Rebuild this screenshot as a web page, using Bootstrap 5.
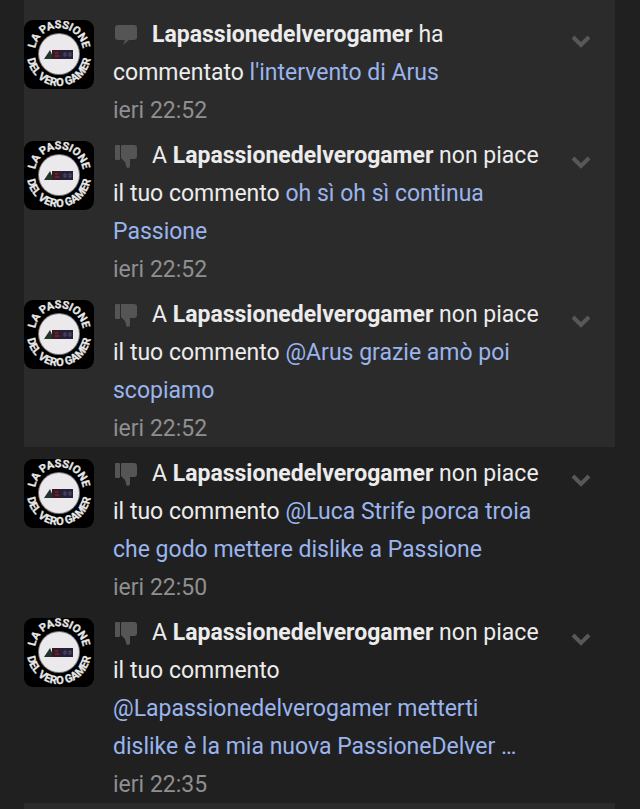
<!DOCTYPE html>
<html lang="it">
<head>
<meta charset="utf-8">
<meta name="viewport" content="width=device-width, initial-scale=1">
<title>Notifiche</title>
<link href="https://cdn.jsdelivr.net/npm/bootstrap@5.3.0/dist/css/bootstrap.min.css" rel="stylesheet">
<style>
body{background:#202020;color:#ececec;font-family:Roboto,"Liberation Sans",sans-serif;font-size:23px;line-height:38px}
.feed{padding:0 25px 0 24px}
.feed-edge{height:8px;background:#2b2b2b}
.notice{padding-top:8px;padding-right:24px}
.notice.unread,.feed-next{background:#2b2b2b}
.feed-next{height:7px}
.avatar{width:70px;margin:4px 19px 0 0}
.message{padding-right:28px}
.kind{width:24px;height:24px;margin-right:15px;fill:#555}
.notice a{color:#9ab5ee}
.notice time{color:#8f8f8f;line-height:37px}
.toggle{width:20px;height:20px;margin-top:15px;color:#585858}
.ring{font-family:Roboto,"Liberation Sans",sans-serif;font-weight:700;font-size:11px;fill:#e8e8e8;stroke:#e8e8e8;stroke-width:.3}
</style>
</head>
<body>
<svg class="position-absolute" width="0" height="0" aria-hidden="true">
<defs>
<path id="arcUpper" d="M12 39A24 24 0 1 1 58 39"/>
<path id="arcLower" d="M3 34A32 32 0 0 0 67 34"/>
</defs>
<symbol id="logo" viewBox="0 0 70 69">
<rect width="70" height="69" rx="9" fill="#000"/>
<text class="ring" text-anchor="middle"><textPath href="#arcUpper" startOffset="50%">LA PASSIONE</textPath></text>
<text class="ring" text-anchor="middle"><textPath href="#arcLower" startOffset="50%">DEL VERO GAMER</textPath></text>
<circle cx="35" cy="34" r="21" fill="#777"/>
<circle cx="35" cy="34" r="20" fill="#ebe9eb"/>
<path d="M20 39l6-9 4 9z" fill="#20352c"/><path d="M28 30h9v9h-9z" fill="#3b1824"/><path d="M37 30h12v9H37z" fill="#24213d"/>
<path d="M31 33h3m-3 3h4m5-3h2v3h-2zm5 0h2v3h-2z" stroke="#96838e" stroke-opacity=".4" fill="none"/>
</symbol>
<symbol id="comment" viewBox="0 0 24 24"><path d="M5 1h16q3 0 3 3v9q0 3-3 3h-5l-6 5 2-5H5q-3 0-3-3V4q0-3 3-3z"/></symbol>
<symbol id="dislike" viewBox="0 0 24 24"><path d="M3 0h3q1 0 1 1v13q0 1-1 1H3q-1 0-1-1V1q0-1 1-1zM9 0h12q3 0 3 3v8q0 3-3 3h-4v6q0 3-2 3t-2-3q-1-4-3-5l-2-2V1q0-1 1-1z"/></symbol>
<symbol id="chevron" viewBox="0 0 20 20"><path d="M2 6l8 8 8-8" fill="none" stroke="currentColor" stroke-width="4"/></symbol>
</svg>
<main class="feed">
<div class="feed-edge"></div>
<article class="notice unread d-flex align-items-start">
<svg class="avatar flex-shrink-0" viewBox="0 0 70 69" role="img" aria-label="La passione del vero gamer"><use href="#logo"/></svg>
<div class="message flex-grow-1"><svg class="kind" aria-hidden="true"><use href="#comment"/></svg><strong>Lapassionedelverogamer</strong> ha commentato <a class="text-decoration-none" href="#">l'intervento di Arus</a><time class="d-block">ieri 22:52</time></div>
<button class="toggle btn border-0 p-0 d-flex flex-shrink-0" type="button" aria-label="Opzioni"><svg width="20" height="20"><use href="#chevron"/></svg></button>
</article>
<article class="notice unread d-flex align-items-start">
<svg class="avatar flex-shrink-0" viewBox="0 0 70 69" role="img" aria-label="La passione del vero gamer"><use href="#logo"/></svg>
<div class="message flex-grow-1"><svg class="kind" aria-hidden="true"><use href="#dislike"/></svg>A <strong>Lapassionedelverogamer</strong> non piace il tuo commento <a class="text-decoration-none" href="#">oh sì oh sì continua Passione</a><time class="d-block">ieri 22:52</time></div>
<button class="toggle btn border-0 p-0 d-flex flex-shrink-0" type="button" aria-label="Opzioni"><svg width="20" height="20"><use href="#chevron"/></svg></button>
</article>
<article class="notice unread d-flex align-items-start">
<svg class="avatar flex-shrink-0" viewBox="0 0 70 69" role="img" aria-label="La passione del vero gamer"><use href="#logo"/></svg>
<div class="message flex-grow-1"><svg class="kind" aria-hidden="true"><use href="#dislike"/></svg>A <strong>Lapassionedelverogamer</strong> non piace il tuo commento <a class="text-decoration-none" href="#">@Arus grazie amò poi scopiamo</a><time class="d-block">ieri 22:52</time></div>
<button class="toggle btn border-0 p-0 d-flex flex-shrink-0" type="button" aria-label="Opzioni"><svg width="20" height="20"><use href="#chevron"/></svg></button>
</article>
<article class="notice d-flex align-items-start">
<svg class="avatar flex-shrink-0" viewBox="0 0 70 69" role="img" aria-label="La passione del vero gamer"><use href="#logo"/></svg>
<div class="message flex-grow-1"><svg class="kind" aria-hidden="true"><use href="#dislike"/></svg>A <strong>Lapassionedelverogamer</strong> non piace il tuo commento <a class="text-decoration-none" href="#">@Luca Strife porca troia che godo mettere dislike a Passione</a><time class="d-block">ieri 22:50</time></div>
<button class="toggle btn border-0 p-0 d-flex flex-shrink-0" type="button" aria-label="Opzioni"><svg width="20" height="20"><use href="#chevron"/></svg></button>
</article>
<article class="notice d-flex align-items-start">
<svg class="avatar flex-shrink-0" viewBox="0 0 70 69" role="img" aria-label="La passione del vero gamer"><use href="#logo"/></svg>
<div class="message flex-grow-1"><svg class="kind" aria-hidden="true"><use href="#dislike"/></svg>A <strong>Lapassionedelverogamer</strong> non piace il tuo commento <a class="text-decoration-none" href="#">@Lapassionedelverogamer metterti dislike è la mia nuova PassioneDelver …</a><time class="d-block">ieri 22:35</time></div>
<button class="toggle btn border-0 p-0 d-flex flex-shrink-0" type="button" aria-label="Opzioni"><svg width="20" height="20"><use href="#chevron"/></svg></button>
</article>
<div class="feed-next"></div>
</main>
<script src="https://cdn.jsdelivr.net/npm/bootstrap@5.3.0/dist/js/bootstrap.bundle.min.js"></script>
</body>
</html>
